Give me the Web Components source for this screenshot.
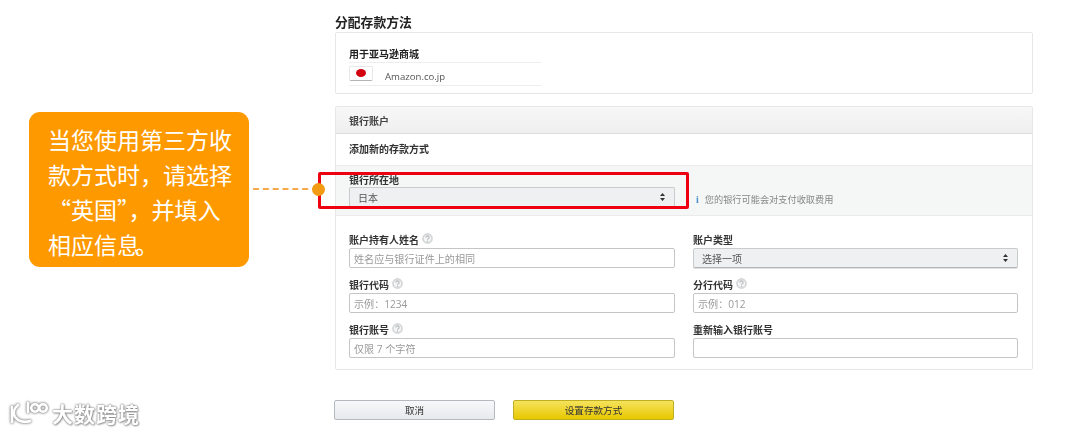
<!DOCTYPE html>
<html lang="zh"><head><meta charset="utf-8">
<style>
html,body{margin:0;background:#fff}
body{width:1080px;height:434px;overflow:hidden;font-family:"Noto Sans CJK SC","Noto Sans",sans-serif;position:relative}
</style></head><body>
<x-page>
  <x-heading>分配存款方法</x-heading>
  <x-panel class="market">
    <x-marketplace label="用于亚马逊商城" name="Amazon.co.jp"></x-marketplace>
  </x-panel>
  <x-bank></x-bank>
  <x-actions></x-actions>
</x-page>
<x-callout>
  <span>当您使用第三方收</span><span>款方式时，请选择</span><span style="font-feature-settings:'fwid'">“英国”，并填入</span><span>相应信<span style="letter-spacing:-5px">息</span>。</span>
</x-callout>
<x-watermark></x-watermark>
<script>
const def=(name,html)=>customElements.define(name,class extends HTMLElement{
  connectedCallback(){ if(this.shadowRoot)return; const r=this.attachShadow({mode:'open'}); r.innerHTML=typeof html==='function'?html(this):html; }
});
const HELP=`<svg width="11" height="11" viewBox="0 0 11 11" style="margin-left:3px;margin-top:-3px;flex:none"><circle cx="5.5" cy="5.5" r="4.5" fill="#f4f5f5" stroke="#d6d8d9" stroke-width="1.8"/><path d="M3.9 4.4a1.6 1.5 0 1 1 2.4 1.3c-.5.3-.8.5-.8 1.1" fill="none" stroke="#b9bbbc" stroke-width="1.2"/><circle cx="5.5" cy="8.2" r=".7" fill="#b9bbbc"/></svg>`;

def('x-page',`<style>:host{display:flex;flex-direction:column;box-sizing:border-box;width:698px;height:434px;margin-left:335px;padding-top:14px;color:#333;filter:blur(.4px)}</style><slot></slot>`);
def('x-heading',`<style>:host{display:block;height:18px;line-height:16px;font-size:12.8px;font-weight:700;color:#222}</style><slot></slot>`);
def('x-panel',`<style>:host{display:block;box-sizing:border-box;height:62px;border:1px solid #e6e8e8;border-radius:2px;padding:14px 13px 0;background:#fff}</style><slot></slot>`);
def('x-marketplace',el=>`<style>
:host{display:block;width:192px}
.l{font-size:10px;font-weight:700;line-height:14px;color:#222;height:15px;border-bottom:1px solid #eeeeee}
.r{display:flex;align-items:center;height:22px;border-bottom:1px solid #eeeeee}
.f{width:24px;height:15px;box-sizing:border-box;border:1px solid #e8e8e8;border-bottom-color:#b5b5b5;border-radius:2px;background:#fff;display:flex;align-items:center;justify-content:center;margin-top:-2px}
.f i{width:10px;height:8px;border-radius:50%;background:#d3000f}
.n{margin-left:12px;font:9.6px "Open Sans",sans-serif;color:#555;margin-top:4px}
</style><div class="l">${el.getAttribute('label')}</div><div class="r"><div class="f"><i></i></div><div class="n">${el.getAttribute('name')}</div></div>`);

def('x-select',el=>`<style>
:host{display:flex;align-items:center;box-sizing:border-box;height:20px;border:1px solid #c9cccc;border-bottom-color:#b4b7b7;border-radius:2px;background:#eef0f1;box-shadow:0 1px 0 #dfe1e1;padding:0 9px 0 8px;font-size:10px;color:#555;justify-content:space-between}
svg{flex:none}
</style><span>${el.getAttribute('value')}</span><svg width="5" height="8" viewBox="0 0 5 8"><path d="M2.5 0 5 3H0zM2.5 8 0 5h5z" fill="#333"/></svg>`);
def('x-input',el=>`<style>
:host{display:flex;align-items:center;box-sizing:border-box;height:20px;border:1px solid #c4c6c6;border-radius:2px;background:#fff;padding:0 4px;font:10.1px "Open Sans","Noto Sans CJK SC",sans-serif;color:#999}
</style><span>${el.getAttribute('placeholder')||''}</span>`);
def('x-field',el=>`<style>
:host{display:block}
.l{display:flex;align-items:center;height:16px;font-size:10px;font-weight:700;color:#333;line-height:16px}
</style><div class="l">${el.getAttribute('label')}${el.hasAttribute('help')?HELP:''}</div><slot></slot>`);

def('x-bank',`<style>
:host{display:block;box-sizing:border-box;height:264px;margin-top:12px;border:1px solid #e6e8e8;border-radius:2px;background:#fff}
.h{height:27px;box-sizing:border-box;background:linear-gradient(#f7f7f7,#efefef);border-bottom:1px solid #dedede;padding:0 13px;font-size:10px;font-weight:700;line-height:27px;color:#444}
.a{height:31px;padding:0 13px;font-size:10px;font-weight:700;line-height:30px;color:#333}
.g{height:51px;box-sizing:border-box;background:#f5f6f6;border-top:1px solid #ebebeb;border-bottom:1px solid #ebebeb;padding:7px 13px 0;display:grid;grid-template-columns:326px 1fr;column-gap:21px}
.g .l{font-size:10px;font-weight:700;line-height:14px;color:#333;height:14px}
.n{align-self:end;display:flex;align-items:center;gap:6px;height:14px;margin-bottom:9px;font-size:9.2px;color:#858787}
.n b{color:#4a90cc;font:700 10px "Liberation Serif",serif}
.f{display:grid;grid-template-columns:326px 325px;column-gap:18px;row-gap:9px;padding:16px 13px 0}
</style>
<div class="h">银行账户</div>
<div class="a">添加新的存款方式</div>
<div class="g"><div><div class="l">银行所在地</div><x-select value="日本"></x-select></div><div class="n"><b>i</b><span>您的银行可能会对支付收取费用</span></div></div>
<div class="f">
 <x-field label="账户持有人姓名" help><x-input placeholder="姓名应与银行证件上的相同"></x-input></x-field>
 <x-field label="账户类型"><x-select value="选择一项"></x-select></x-field>
 <x-field label="银行代码" help><x-input placeholder="示例：1234"></x-input></x-field>
 <x-field label="分行代码" help><x-input placeholder="示例：012"></x-input></x-field>
 <x-field label="银行账号" help><x-input placeholder="仅限 7 个字符"></x-input></x-field>
 <x-field label="重新输入银行账号"><x-input></x-input></x-field>
</div>`);
def('x-actions',`<style>
:host{display:flex;gap:18px;margin-top:30px;margin-left:-1px}
div{box-sizing:border-box;width:161px;height:20px;border-radius:2px;display:flex;align-items:center;justify-content:center;font-size:9.6px;color:#333}
.c{background:linear-gradient(#f7f8fa,#e7e9ec);border:1px solid #b5b9bf}
.p{background:linear-gradient(#f5e25c,#e8c800);border:1px solid #bfae20}
</style><div class="c">取消</div><div class="p">设置存款方式</div>`);

def('x-callout',`<style>
:host{position:absolute;left:29px;top:112px;width:220px;height:155px;box-sizing:border-box;background:#ff9900;border-radius:11px;padding:10px 0 0 19px;color:#fff;font-size:23px;line-height:35px;display:block;filter:blur(.4px)}
::slotted(span){display:block;white-space:nowrap}
.d{position:absolute;left:224px;top:76px;width:65px;border-top:2px dashed #f5a94a}
.o{position:absolute;left:283px;top:71px;width:13px;height:13px;border-radius:50%;background:#f29a12;z-index:3}
.r{position:absolute;left:289px;top:60px;width:371px;height:37px;box-sizing:border-box;border:3px solid #ee0010;border-radius:2px}
</style><slot></slot><div class="d"></div><div class="r"></div><div class="o"></div>`);
def('x-watermark',`<style>
:host{position:absolute;left:8px;top:398px;display:flex;align-items:center;gap:3px;height:30px;filter:blur(.4px)}
span{font-size:21px;font-weight:700;color:#fff;letter-spacing:1px;line-height:30px;text-shadow:0 0 2px #888,0 0 2px #888,1px 1px 2px #aaa}
svg{filter:drop-shadow(0 0 1px #888) drop-shadow(0 0 1px #aaa)}
</style><svg width="41" height="30" viewBox="0 0 41 30"><g fill="none" stroke="#fff" stroke-width="2.6" stroke-linecap="round"><path d="M4 9v15"/><path d="M10 7C5 11 5 16 7 19c3 4 9 6 15 4"/><path d="M20 5v9"/><circle cx="27" cy="10" r="3.8"/><circle cx="35" cy="10" r="3.8"/></g></svg><span>大数跨境</span>`);
</script>
</body></html>
